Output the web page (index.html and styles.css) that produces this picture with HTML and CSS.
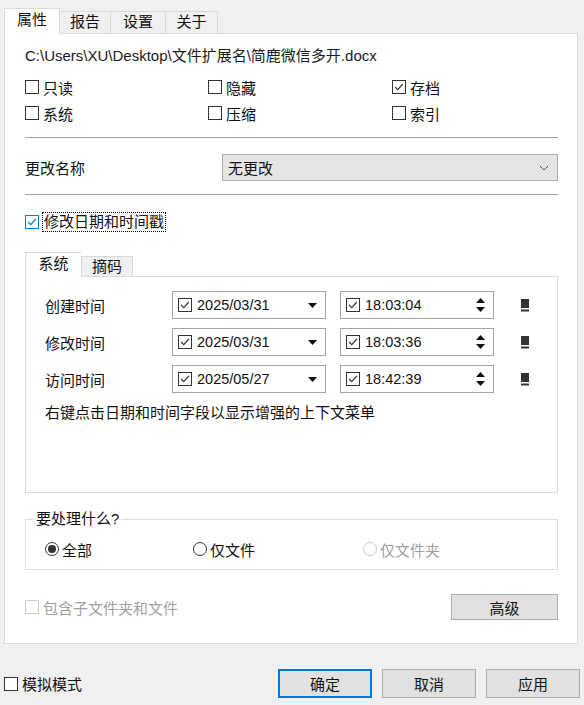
FILE: index.html
```html
<!DOCTYPE html>
<html lang="zh-CN">
  <head>
    <meta charset="UTF-8" />
    <title>属性</title>
    <link rel="stylesheet" href="styles.css">
  </head>
  <body>
    <div class="tabs">
      <div class="tab active">属性</div>
      <div class="tab">报告</div>
      <div class="tab">设置</div>
      <div class="tab">关于</div>
    </div>

    <div class="panel">
      <p class="path">C:\Users\XU\Desktop\文件扩展名\简鹿微信多开.docx</p>

      <div class="attrs">
        <label class="check"><span class="box"></span>只读</label>
        <label class="check"><span class="box"></span>隐藏</label>
        <label class="check"><span class="box"><svg viewBox="0 0 14 14"><path d="M2.5 7 L5.5 10 L11.5 3.5" /></svg></span>存档</label>
        <label class="check"><span class="box"></span>系统</label>
        <label class="check"><span class="box"></span>压缩</label>
        <label class="check"><span class="box"></span>索引</label>
      </div>

      <div class="sep first"></div>

      <div class="rename">
        <span class="rename-label">更改名称</span>
        <div class="select">
          <span>无更改</span>
          <svg class="chevron" viewBox="0 0 10 6"><path d="M1 1 L5 5 L9 1" /></svg>
        </div>
      </div>

      <div class="sep second"></div>

      <label class="check main"><span class="box blue"><svg viewBox="0 0 14 14"><path d="M2.5 7 L5.5 10 L11.5 3.5" /></svg></span><span class="focus">修改日期和时间戳</span></label>

      <div class="subtabs">
        <div class="subtab active">系统</div>
        <div class="subtab">摘码</div>
      </div>
      <div class="subpanel">
        <div class="rows">
          <div class="row">
            <span class="row-label">创建时间</span>
            <div class="field date">
              <span class="box"><svg viewBox="0 0 14 14"><path d="M2.5 7 L5.5 10 L11.5 3.5" /></svg></span>
              <span class="value">2025/03/31</span>
              <svg class="drop" viewBox="0 0 9 5"><polygon points="0,0 9,0 4.5,5" /></svg>
            </div>
            <div class="field time">
              <span class="box"><svg viewBox="0 0 14 14"><path d="M2.5 7 L5.5 10 L11.5 3.5" /></svg></span>
              <span class="value">18:03:04</span>
              <svg class="spin" viewBox="0 0 9 14"><polygon points="4.5,0 9,5 0,5" /><polygon points="0,9 9,9 4.5,14" /></svg>
            </div>
            <svg class="pin" viewBox="0 0 8 13"><rect x="0" y="0" width="8" height="9" /><rect x="0" y="10.5" width="8" height="2" /></svg>
          </div>
          <div class="row">
            <span class="row-label">修改时间</span>
            <div class="field date">
              <span class="box"><svg viewBox="0 0 14 14"><path d="M2.5 7 L5.5 10 L11.5 3.5" /></svg></span>
              <span class="value">2025/03/31</span>
              <svg class="drop" viewBox="0 0 9 5"><polygon points="0,0 9,0 4.5,5" /></svg>
            </div>
            <div class="field time">
              <span class="box"><svg viewBox="0 0 14 14"><path d="M2.5 7 L5.5 10 L11.5 3.5" /></svg></span>
              <span class="value">18:03:36</span>
              <svg class="spin" viewBox="0 0 9 14"><polygon points="4.5,0 9,5 0,5" /><polygon points="0,9 9,9 4.5,14" /></svg>
            </div>
            <svg class="pin" viewBox="0 0 8 13"><rect x="0" y="0" width="8" height="9" /><rect x="0" y="10.5" width="8" height="2" /></svg>
          </div>
          <div class="row">
            <span class="row-label">访问时间</span>
            <div class="field date">
              <span class="box"><svg viewBox="0 0 14 14"><path d="M2.5 7 L5.5 10 L11.5 3.5" /></svg></span>
              <span class="value">2025/05/27</span>
              <svg class="drop" viewBox="0 0 9 5"><polygon points="0,0 9,0 4.5,5" /></svg>
            </div>
            <div class="field time">
              <span class="box"><svg viewBox="0 0 14 14"><path d="M2.5 7 L5.5 10 L11.5 3.5" /></svg></span>
              <span class="value">18:42:39</span>
              <svg class="spin" viewBox="0 0 9 14"><polygon points="4.5,0 9,5 0,5" /><polygon points="0,9 9,9 4.5,14" /></svg>
            </div>
            <svg class="pin" viewBox="0 0 8 13"><rect x="0" y="0" width="8" height="9" /><rect x="0" y="10.5" width="8" height="2" /></svg>
          </div>
        </div>
        <p class="note">右键点击日期和时间字段以显示增强的上下文菜单</p>
      </div>

      <fieldset class="group">
        <legend>要处理什么?</legend>
        <div class="radios">
          <label class="radio all"><span class="dot on"></span>全部</label>
          <label class="radio files"><span class="dot"></span>仅文件</label>
          <label class="radio disabled"><span class="dot"></span>仅文件夹</label>
        </div>
      </fieldset>

      <div class="bottom">
        <label class="check disabled"><span class="box"></span>包含子文件夹和文件</label>
        <button class="btn advanced">高级</button>
      </div>
    </div>

    <div class="footer">
      <label class="check"><span class="box"></span>模拟模式</label>
      <div class="actions">
        <button class="btn default">确定</button>
        <button class="btn">取消</button>
        <button class="btn">应用</button>
      </div>
    </div>
  </body>
</html>
```

FILE: styles.css
```css
* {
  box-sizing: border-box;
}

body {
  margin: 0;
  width: 584px;
  height: 705px;
  overflow: hidden;
  background: #f0f0f0;
  font-family: "Liberation Sans", "Noto Sans CJK SC", sans-serif;
  font-size: 15px;
  color: #111;
}

/* top tabs */
.tabs {
  display: flex;
  align-items: flex-end;
  height: 33px;
  padding-left: 5px;
}

.tab {
  height: 22px;
  line-height: 20px;
  text-align: center;
  background: #f0f0f0;
  border: 1px solid #d9d9d9;
  border-bottom: none;
  margin-left: -1px;
}

.tab:nth-child(1) { width: 56px; }
.tab:nth-child(2) { width: 52px; }
.tab:nth-child(3) { width: 56px; }
.tab:nth-child(4) { width: 53px; }

.tab.active {
  height: 26px;
  line-height: 22px;
  margin-bottom: -1px;
  background: #fff;
  position: relative;
  z-index: 1;
}

.panel {
  margin-left: 4px;
  width: 574px;
  height: 611px;
  background: #fff;
  border: 1px solid #d9d9d9;
  padding: 12px 19px 0 20px;
}

.path {
  margin: 0;
  line-height: 20px;
  color: #1a1a1a;
  white-space: nowrap;
}

/* checkboxes */
.check {
  display: flex;
  align-items: center;
  gap: 4px;
  height: 26px;
  white-space: nowrap;
}

.box {
  display: inline-flex;
  width: 14px;
  height: 14px;
  border: 1px solid #333;
  background: #fff;
  flex: none;
}

.box svg {
  width: 12px;
  height: 12px;
  fill: none;
  stroke: #333;
  stroke-width: 1.3;
}

.box.blue {
  border-color: #0078d7;
}

.box.blue svg {
  stroke: #0078d7;
}

.check.disabled {
  color: #a0a0a0;
}

.check.disabled .box {
  border-color: #cccccc;
}

.attrs {
  display: grid;
  grid-template-columns: 183px 184px 1fr;
  margin-top: 8px;
}

.sep {
  border-top: 1px solid #a0a0a0;
}

.sep.first {
  margin-top: 11px;
}

.sep.second {
  margin-top: 13px;
}

.rename {
  display: flex;
  align-items: center;
  margin-top: 16px;
  height: 27px;
}

.rename-label {
  width: 197px;
}

.select {
  flex: 1;
  height: 27px;
  display: flex;
  align-items: center;
  justify-content: space-between;
  padding: 0 8px 0 5px;
  background: #e5e5e5;
  border: 1px solid #acacac;
}

.chevron {
  width: 10px;
  height: 6px;
  fill: none;
  stroke: #555;
  stroke-width: 1;
}

.check.main {
  margin-top: 14px;
}

.focus {
  outline: 1px dotted #000;
  line-height: 18px;
  padding: 0 1px;
}

/* inner tabs */
.subtabs {
  display: flex;
  align-items: flex-end;
  height: 24px;
  margin-top: 17px;
}

.subtab {
  height: 20px;
  width: 52px;
  line-height: 19px;
  text-align: center;
  background: #f0f0f0;
  border: 1px solid #d9d9d9;
  border-bottom: none;
}

.subtab.active {
  width: 56px;
  height: 25px;
  line-height: 21px;
  margin-bottom: -1px;
  background: #fff;
  position: relative;
  z-index: 1;
  border-right: none;
}

.subpanel {
  height: 217px;
  border: 1px solid #d9d9d9;
  padding: 14px 0 0 19px;
}

.rows {
  display: flex;
  flex-direction: column;
  gap: 9px;
}

.row {
  display: flex;
  align-items: center;
  height: 28px;
}

.row-label {
  width: 127px;
}

.field {
  display: flex;
  align-items: center;
  width: 154px;
  height: 28px;
  border: 1px solid #a5a5a5;
  padding: 0 8px 0 5px;
  font-size: 14.5px;
}

.field .box {
  margin-right: 5px;
}

.field .value {
  flex: 1;
}

.field.time {
  margin-left: 14px;
}

.drop {
  width: 9px;
  height: 5px;
  fill: #111;
}

.spin {
  width: 9px;
  height: 14px;
  fill: #111;
}

.pin {
  width: 8px;
  height: 13px;
  fill: #333;
  margin-left: 27px;
}

.note {
  margin: 10px 0 0;
  line-height: 20px;
}

/* group box */
.group {
  margin: 16px 0 0;
  border: 1px solid #dcdcdc;
  padding: 10px 19px 10px 19px;
  min-width: 0;
}

.group legend {
  margin-left: -11px;
  padding: 0 2px;
  line-height: 20px;
}

.radios {
  display: flex;
  height: 20px;
  align-items: center;
}

.radio {
  display: flex;
  align-items: center;
  gap: 3px;
}

.radio.all {
  width: 148px;
}

.radio.files {
  width: 170px;
}

.radio.disabled {
  color: #a0a0a0;
}

.dot {
  width: 14px;
  height: 14px;
  border: 1px solid #333;
  border-radius: 50%;
  display: inline-flex;
  align-items: center;
  justify-content: center;
}

.dot.on::after {
  content: "";
  width: 8px;
  height: 8px;
  border-radius: 50%;
  background: #333;
}

.radio.disabled .dot {
  border-color: #cccccc;
}

.bottom {
  display: flex;
  align-items: center;
  justify-content: space-between;
  margin-top: 24px;
  height: 26px;
}

.btn {
  font-family: "Liberation Sans", "Noto Sans CJK SC", sans-serif;
  font-size: 15px;
  color: #111;
  background: #e1e1e1;
  border: 1px solid #adadad;
  padding: 0;
}

.btn.advanced {
  width: 107px;
  height: 26px;
}

/* footer */
.footer {
  display: flex;
  align-items: center;
  height: 61px;
  padding: 18px 4px 0;
}

.actions {
  margin-left: auto;
  display: flex;
  gap: 10px;
}

.actions .btn {
  width: 94px;
  height: 29px;
}

.btn.default {
  border-color: #0078d7;
  box-shadow: inset 0 0 0 1px #0078d7;
}
```
